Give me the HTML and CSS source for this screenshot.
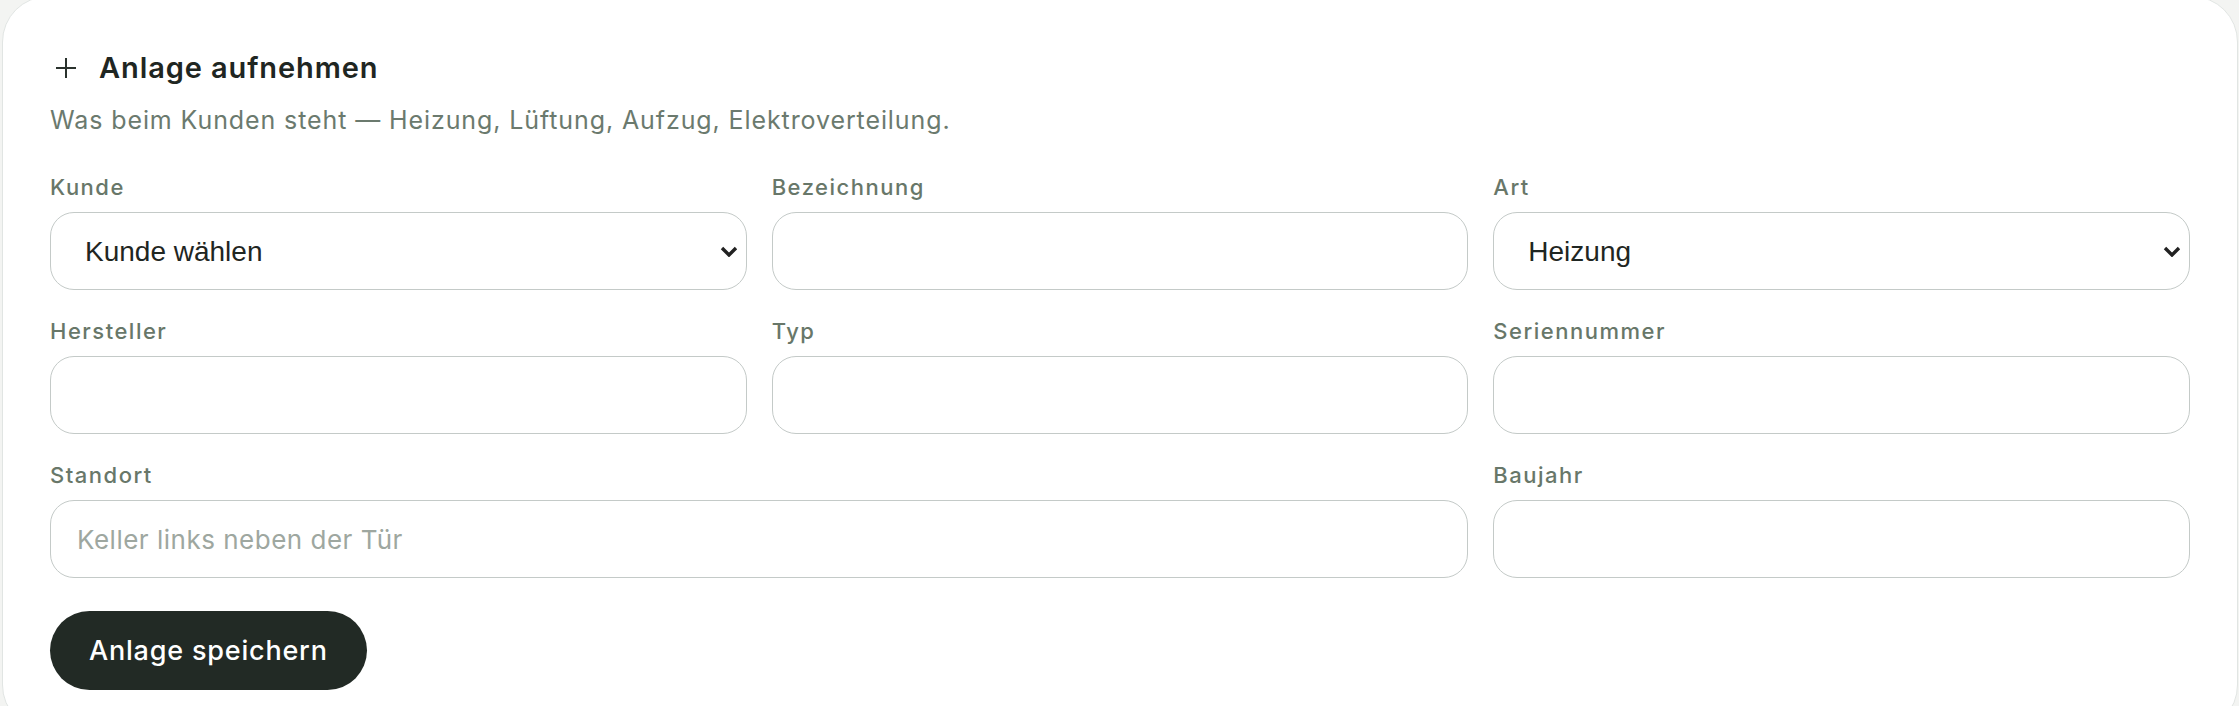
FILE: index.html
```html
<!DOCTYPE html>
<html lang="de">
<head>
    <meta charset="UTF-8">
    <meta name="viewport" content="width=device-width, initial-scale=1.0">
    <title>Anlage aufnehmen</title>
    <link rel="stylesheet" href="styles.css">
</head>
<body>

    <div class="card">
        <h2 class="card-title">
            <svg class="plus-icon" viewBox="0 0 22 22" width="22" height="22" aria-hidden="true">
                <path d="M11 1v20M1 11h20" stroke="currentColor" stroke-width="2" fill="none"/>
            </svg>
            Anlage aufnehmen
        </h2>
        <p class="card-sub">Was beim Kunden steht — Heizung, Lüftung, Aufzug, Elektroverteilung.</p>

        <form class="form-grid" onsubmit="return false">
            <div class="field">
                <label for="kunde">Kunde</label>
                <select id="kunde" class="input">
                    <option>Kunde wählen</option>
                </select>
            </div>
            <div class="field">
                <label for="bezeichnung">Bezeichnung</label>
                <input type="text" id="bezeichnung" class="input">
            </div>
            <div class="field">
                <label for="art">Art</label>
                <select id="art" class="input">
                    <option>Heizung</option>
                    <option>Lüftung</option>
                    <option>Aufzug</option>
                    <option>Elektroverteilung</option>
                </select>
            </div>

            <div class="field">
                <label for="hersteller">Hersteller</label>
                <input type="text" id="hersteller" class="input">
            </div>
            <div class="field">
                <label for="typ">Typ</label>
                <input type="text" id="typ" class="input">
            </div>
            <div class="field">
                <label for="seriennummer">Seriennummer</label>
                <input type="text" id="seriennummer" class="input">
            </div>

            <div class="field wide">
                <label for="standort">Standort</label>
                <input type="text" id="standort" class="input" placeholder="Keller links neben der Tür">
            </div>
            <div class="field">
                <label for="baujahr">Baujahr</label>
                <input type="text" id="baujahr" class="input">
            </div>

            <div class="actions">
                <button type="submit" class="btn-save">Anlage speichern</button>
            </div>
        </form>
    </div>

</body>
</html>
```

FILE: styles.css
```css
body {
    margin: 0;
    padding: 0;
    background-color: #f3f4f2;
    font-family: Inter, "Noto Sans", sans-serif;
    color: #1f2622;
}

.card {
    margin: -4px 1px 0 2px;
    padding: 52px 47px 40px;
    background-color: #ffffff;
    border: 1px solid #e1e5e3;
    border-radius: 46px;
}

.card-title {
    display: flex;
    align-items: center;
    gap: 22px;
    margin: 0;
    padding-left: 5px;
    font-size: 29px;
    line-height: 38px;
    font-weight: 600;
    letter-spacing: 0.9px;
    color: #1f2622;
}

.plus-icon {
    flex: none;
    color: #2a322d;
}

.card-sub {
    margin: 15px 0 0;
    font-size: 25px;
    line-height: 37px;
    letter-spacing: 0.9px;
    color: #6b7a6e;
}

.form-grid {
    display: grid;
    grid-template-columns: repeat(3, 1fr);
    column-gap: 25px;
    row-gap: 26px;
    margin-top: 33px;
}

.field {
    display: flex;
    flex-direction: column;
}

.field.wide {
    grid-column: span 2;
}

.field label {
    font-size: 22px;
    line-height: 30px;
    margin-bottom: 10px;
    font-weight: 500;
    letter-spacing: 1.5px;
    color: #687769;
}

.input {
    box-sizing: border-box;
    width: 100%;
    height: 78px;
    padding: 0 26px;
    font-family: Inter, "Noto Sans", sans-serif;
    font-size: 26px;
    letter-spacing: 0.5px;
    color: #1f2622;
    background-color: #ffffff;
    border: 1.5px solid #c4cac8;
    border-radius: 24px;
    outline: none;
}

.input::placeholder {
    color: #9ea7a0;
}

select.input {
    appearance: none;
    padding-left: 34px;
    padding-right: 50px;
    font-family: "Liberation Sans", Arial, sans-serif;
    font-size: 28px;
    letter-spacing: 0;
    background-image: url("data:image/svg+xml,%3Csvg xmlns='http://www.w3.org/2000/svg' width='18' height='11' viewBox='0 0 18 11'%3E%3Cpath d='M2 2l7 7 7-7' stroke='%23222' stroke-width='3.4' fill='none'/%3E%3C/svg%3E");
    background-repeat: no-repeat;
    background-position: right 8px center;
    background-size: 18px 11px;
}

.actions {
    grid-column: 1 / -1;
    margin-top: 7px;
}

.btn-save {
    height: 79px;
    padding: 0 39px;
    font-family: Inter, "Noto Sans", sans-serif;
    font-size: 27px;
    font-weight: 500;
    letter-spacing: 0.8px;
    color: #ffffff;
    background-color: #222a25;
    border: none;
    border-radius: 40px;
    cursor: pointer;
}

.btn-save:hover {
    background-color: #333d37;
}
```
